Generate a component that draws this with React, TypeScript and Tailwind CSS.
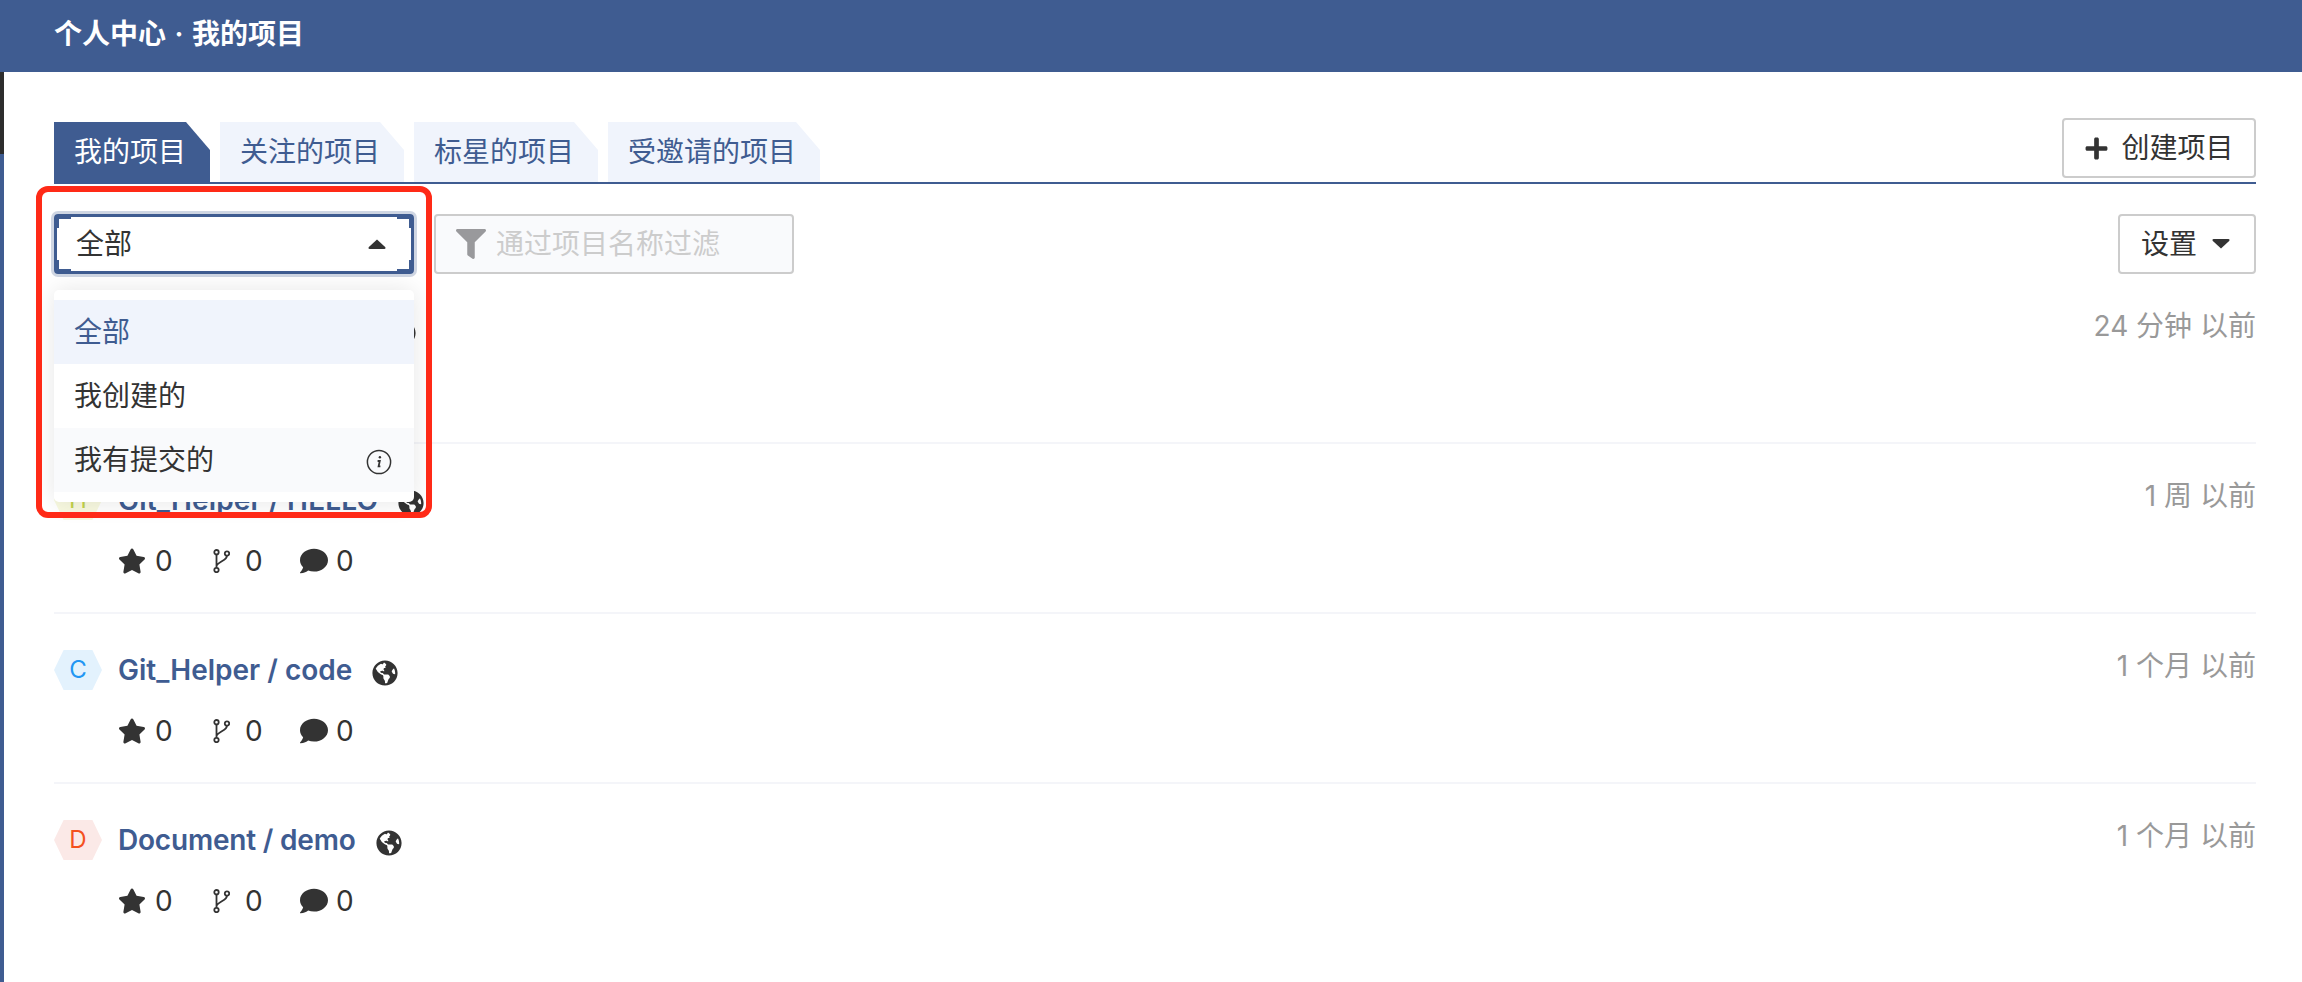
import { FaComment, FaFilter, FaGlobeAmericas, FaPlus, FaStar } from 'react-icons/fa'

const projects = [
  { letter: '', hexClass: '', title: '', titleClass: '', time: '24 分钟 以前' },
  { letter: 'H', hexClass: 'bg-[#f8f9e0] text-[#c3d34a]', title: 'Git_Helper / HELLO', titleClass: 'tracking-[0.17px]', time: '1 周 以前' },
  { letter: 'C', hexClass: 'bg-[#e3f2fd] text-[#2196f3]', title: 'Git_Helper / code', titleClass: '', time: '1 个月 以前' },
  { letter: 'D', hexClass: 'bg-[#fbe9e7] text-[#f4511e]', title: 'Document / demo', titleClass: 'tracking-[-0.2px]', time: '1 个月 以前' },
]

const tabs = ['关注的项目', '标星的项目', '受邀请的项目']

function ForkIcon() {
  return (
    <svg width="17" height="24" viewBox="0 0 17 24" fill="none" stroke="#333" strokeWidth="1.8">
      <circle cx="3.5" cy="3.2" r="2.2" />
      <circle cx="14" cy="4.5" r="2.2" />
      <circle cx="3.5" cy="21" r="2.2" />
      <path d="M3.5 5.4V18.8M14 6.7C14 11.5 5 12.5 3.5 17" />
    </svg>
  )
}

function InfoIcon() {
  return (
    <svg width="26" height="26" viewBox="0 0 26 26" fill="none" stroke="#333" strokeWidth="1.5">
      <circle cx="13" cy="13" r="11.6" />
      <path d="M11.6 12h2.2l-1.2 5.4h1.8" strokeWidth="1.8" />
      <circle cx="13.9" cy="8.2" r="1.2" fill="#333" stroke="none" />
    </svg>
  )
}

function Caret({ up }: { up?: boolean }) {
  return (
    <svg width="18" height="10" viewBox="0 0 18 10" fill="#333">
      <path
        d={up ? 'M9 0.5L17.4 8.2Q18 10 16.5 10H1.5Q0 10 .6 8.2Z' : 'M9 9.5L17.4 1.8Q18 0 16.5 0H1.5Q0 0 .6 1.8Z'}
      />
    </svg>
  )
}

function Stat({ icon, value, className }: { icon: React.ReactNode; value: number; className: string }) {
  return (
    <span className={`flex items-center ${className}`}>
      {icon}
      <span>{value}</span>
    </span>
  )
}

function ProjectRow({ project }: { project: (typeof projects)[number] }) {
  return (
    <div className="flex h-[170px] justify-between border-b-2 border-[#f4f5f9] pt-[36px] last:border-b-0">
      <div>
        <div className="flex h-[40px] items-center">
          <span
            className={`flex h-[40px] w-[48px] items-center justify-center text-[24px] [clip-path:polygon(20%_0,80%_0,100%_50%,80%_100%,20%_100%,0_50%)] ${project.hexClass}`}
          >
            {project.letter}
          </span>
          {project.title ? (
            <span className={`ml-[16px] text-[28px] font-semibold text-[#3f5c91] ${project.titleClass}`}>
              {project.title}
            </span>
          ) : (
            <span className="ml-[16px] w-[252px]" />
          )}
          <FaGlobeAmericas className="ml-[20px] mt-[6px] text-[26px] text-[#333]" />
        </div>
        <div className="ml-[64px] mt-[21px] flex h-[40px] items-center text-[28px] text-[#333]">
          <Stat icon={<FaStar className="mr-[9px] text-[28px]" />} value={0} className="w-[95px]" />
          <Stat icon={<span className="mr-[15px] flex"><ForkIcon /></span>} value={0} className="w-[87px]" />
          <Stat icon={<FaComment className="mr-[8px] text-[28px]" />} value={0} className="" />
        </div>
      </div>
      <span className="-mt-[4px] h-[40px] text-[28px] leading-[40px] text-[#999]">{project.time}</span>
    </div>
  )
}

function CornerNotch({ className }: { className: string }) {
  return <span className={`absolute h-[11px] w-[14px] border-[#3f5c91] ${className}`} />
}

export default function App() {
  return (
    <div className="min-h-[982px] bg-white font-['Inter','Noto_Sans_CJK_SC',sans-serif]">
      <header className="flex h-[72px] items-center bg-[#3f5c91] pb-[4px] pl-[54px] text-[28px] font-semibold text-white [word-spacing:1.5px]">
        个人中心 · 我的项目
      </header>

      <div className="flex">
        <aside className="flex min-h-[910px] w-[4px] flex-col bg-[#3f5c91]">
          <div className="h-[82px] bg-[#2d2d2d]" />
        </aside>

        <main className="relative flex-1 pl-[50px] pr-[46px] pt-[46px]">
          {/* tabs */}
          <div className="flex h-[66px] items-end justify-between border-b-2 border-[#3f5c91]">
            <div className="flex gap-[10px]">
              <div className="-mb-[2px] flex h-[62px] w-[156px] items-center pb-[2px] pl-[20px] text-[28px] text-white bg-[#3f5c91] [clip-path:polygon(0_0,132px_0,100%_28px,100%_100%,0_100%)]">
                我的项目
              </div>
              {tabs.map((tab) => (
                <div
                  key={tab}
                  className="flex h-[60px] items-center bg-[#f0f4fc] pl-[20px] pr-[24px] text-[28px] text-[#3f5c91] [clip-path:polygon(0_0,calc(100%-24px)_0,100%_28px,100%_100%,0_100%)]"
                >
                  {tab}
                </div>
              ))}
            </div>
            <button className="mb-[4px] flex h-[60px] w-[194px] items-center justify-center rounded-[4px] border-2 border-[#ccc] text-[28px] text-[#333]">
              <FaPlus className="mr-[12px] text-[25px]" />
              创建项目
            </button>
          </div>

          {/* filter bar */}
          <div className="mt-[30px] flex h-[60px] items-center justify-between">
            <div className="flex gap-[20px]">
              <div className="relative w-[360px]">
                <div className="relative flex h-[60px] items-center justify-between rounded-[4px] border-[3px] border-[#3f5c91] pl-[19px] pr-[25px] text-[28px] text-[#333] shadow-[0_0_0_3px_rgba(63,92,145,0.25)]">
                  全部
                  <Caret up />
                  <CornerNotch className="left-0 top-0 border-l-2 border-t-2" />
                  <CornerNotch className="right-0 top-0 border-r-2 border-t-2" />
                  <CornerNotch className="bottom-0 left-0 border-b-2 border-l-2" />
                  <CornerNotch className="bottom-0 right-0 border-b-2 border-r-2" />
                </div>
                {/* open select menu */}
                <div className="absolute left-0 top-[76px] z-10 w-[360px] rounded-[5px] bg-white py-[10px] text-[28px] text-[#333] shadow-[0_0_24px_rgba(0,0,0,0.1)]">
                  <div className="flex h-[64px] items-center bg-[#f0f4fc] pl-[20px] text-[#3f5c91]">全部</div>
                  <div className="flex h-[64px] items-center pl-[20px]">我创建的</div>
                  <div className="flex h-[64px] items-center justify-between bg-[#f9fafc] pl-[20px] pr-[22px]">
                    我有提交的
                    <span className="mt-[4px] flex"><InfoIcon /></span>
                  </div>
                </div>
              </div>
              <div className="flex h-[60px] w-[360px] items-center rounded-[4px] border-2 border-[#ccc] bg-[#f9fafc] pl-[20px] text-[28px] text-[#ccc]">
                <FaFilter className="mr-[10px] text-[30px] text-[#99999c]" />
                通过项目名称过滤
              </div>
            </div>
            <button className="flex h-[60px] w-[138px] items-center gap-[15px] rounded-[4px] border-2 border-[#ccc] pl-[21px] text-[28px] text-[#333]">
              设置
              <Caret />
            </button>
          </div>

          {/* project list */}
          <div>
            {projects.map((project, i) => (
              <ProjectRow key={i} project={project} />
            ))}
          </div>

          {/* red annotation box */}
          <div className="pointer-events-none absolute left-[32px] top-[114px] z-20 h-[332px] w-[396px] rounded-[12px] border-[6px] border-[#ff2a17]" />
        </main>
      </div>
    </div>
  )
}
